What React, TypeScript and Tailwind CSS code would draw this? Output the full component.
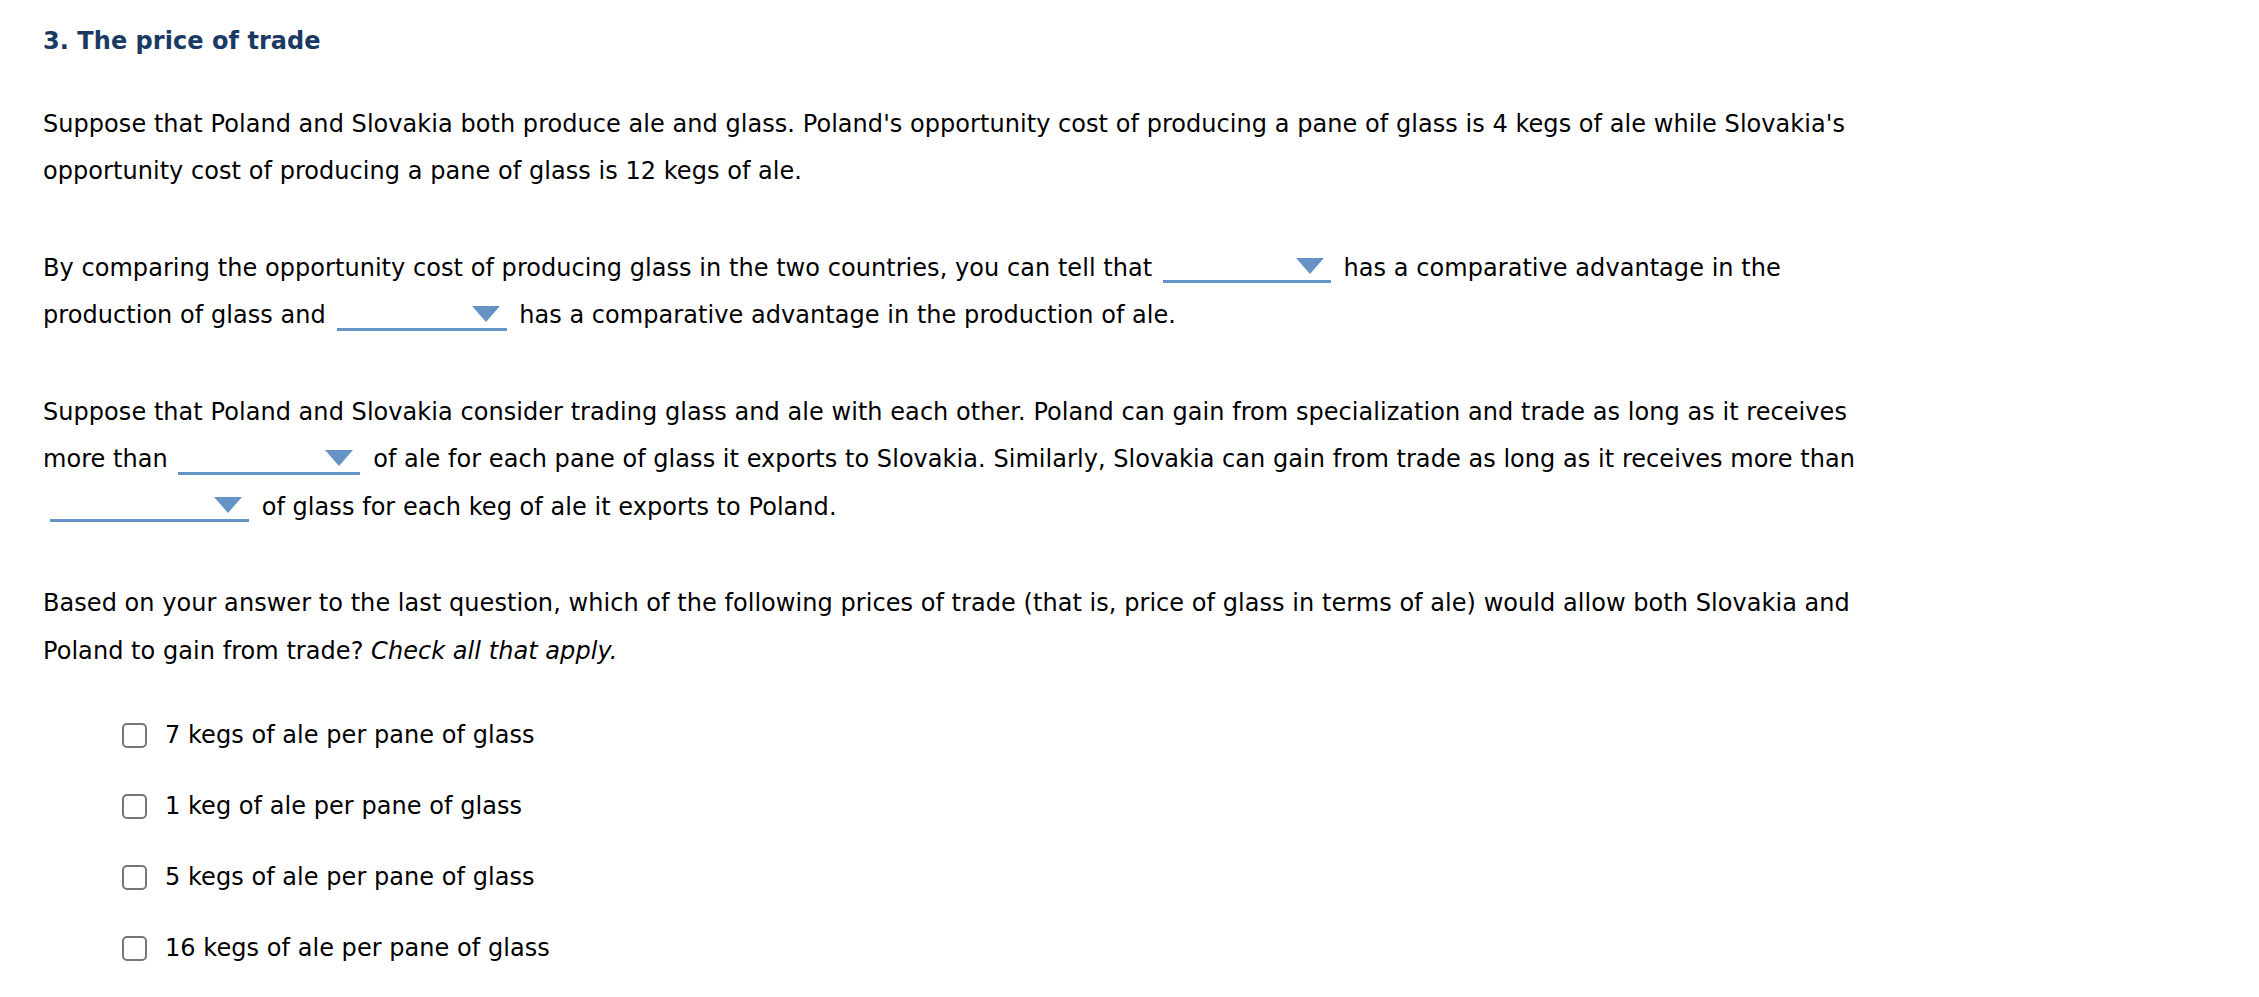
import React from "react";

const font = { fontFamily: 'Verdana, "DejaVu Sans", sans-serif' };

function Dropdown({ width, className = "ml-[3px]" }: { width: number; className?: string }) {
  return (
    <span
      className={`mr-[5px] inline-flex h-[29px] items-center justify-end border-b-[3px] border-[#6593c6] pr-[7px] align-middle ${className}`}
      style={{ width }}
    >
      <svg width="28" height="16" viewBox="0 0 28 16" className="mb-[2px]">
        <polygon points="0,0 28,0 14,16" fill="#6593c6" />
      </svg>
    </span>
  );
}

const options = [
  "7 kegs of ale per pane of glass",
  "1 keg of ale per pane of glass",
  "5 kegs of ale per pane of glass",
  "16 kegs of ale per pane of glass",
];

export default function App() {
  return (
    <div className="min-h-screen bg-white pl-[43px] pt-[18px] text-[24px] tracking-[0.05px] text-black" style={font}>
      <h1 className="text-[24px] font-bold leading-[47.5px] text-[#1b3a63]">3. The price of trade</h1>

      <div className="mt-[35px] w-[1850px] leading-[47.5px]">
        <p className="mb-[49px]">
          Suppose that Poland and Slovakia both produce ale and glass. Poland's opportunity cost of producing a pane of
          glass is 4 kegs of ale while Slovakia's opportunity cost of producing a pane of glass is 12 kegs of ale.
        </p>

        <p className="mb-[49px]">
          By comparing the opportunity cost of producing glass in the two countries, you can tell that{" "}
          <Dropdown width={168} /> has a comparative advantage in the production of glass and{" "}
          <Dropdown width={170} /> has a comparative advantage in the production of ale.
        </p>

        <p className="mb-[49px]">
          Suppose that Poland and Slovakia consider trading glass and ale with each other. Poland can gain from
          specialization and trade as long as it receives more than <Dropdown width={182} /> of ale for each pane of
          glass it exports to Slovakia. Similarly, Slovakia can gain from trade as long as it receives more than{" "}
          <Dropdown width={199} className="ml-[7px]" /> of glass for each keg of ale it exports to Poland.
        </p>

        <p>
          Based on your answer to the last question, which of the following prices of trade (that is, price of glass in
          terms of ale) would allow both Slovakia and Poland to gain from trade? <i>Check all that apply.</i>
        </p>
      </div>

      <div className="mt-[36px] flex flex-col gap-[23px] pl-[79px]">
        {options.map((o) => (
          <label key={o} className="flex h-[48px] items-center gap-[18px]">
            <span className="h-[25px] w-[25px] rounded-[5px] border-2 border-[#767676] bg-white" />
            <span>{o}</span>
          </label>
        ))}
      </div>
    </div>
  );
}
